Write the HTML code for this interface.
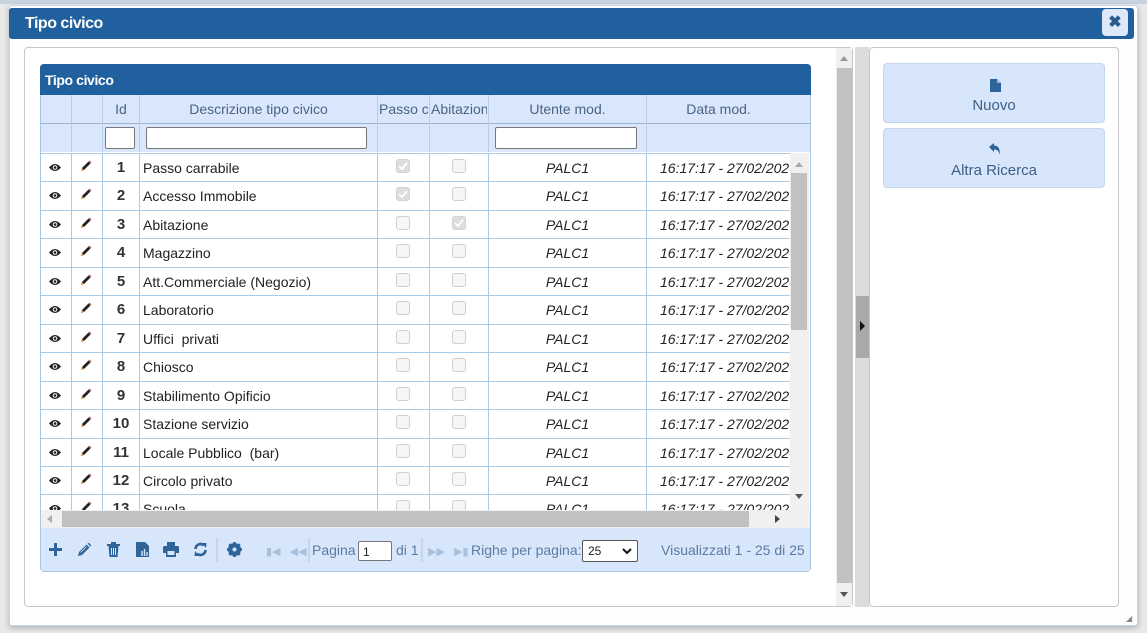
<!DOCTYPE html>
<html><head><meta charset="utf-8"><style>
*{box-sizing:border-box;margin:0;padding:0}
body{width:1147px;height:633px;background:#e9e9e9;font-family:"Liberation Sans",sans-serif;position:relative;overflow:hidden}
.a{position:absolute}
.dlg{left:9px;top:5px;width:1129px;height:621px;background:#fdfeff;border:1px solid #c8d6e6;border-radius:3px;box-shadow:0 2px 6px rgba(0,0,0,.25)}
.tb{left:9px;top:8px;width:1125px;height:31px;background:#20609e;border-radius:3px}
.tb span{position:absolute;left:16px;top:7px;color:#fff;font-weight:bold;font-size:16px;letter-spacing:-.5px}
.close{left:1102px;top:9px;width:26px;height:27px;background:#dde8f9;border-radius:4px;color:#2a5c8c;font-weight:bold;font-size:16px;text-align:center;line-height:27px}
.lp{left:24px;top:47px;width:829px;height:560px;border:1px solid #c6c6c6;border-radius:4px;background:#fff}
.vs{left:836px;top:48px;width:16px;height:558px;background:#f0f0f0}
.vthumb{left:837px;top:68px;width:15px;height:515px;background:#c1c1c1}
.split{left:855px;top:47px;width:14px;height:560px;background:#dcdcdc}
.rp{left:869px;top:47px;width:250px;height:560px;border:1px solid #c6c6c6;border-radius:4px;background:#fff}
.btn{left:883px;width:222px;height:60px;background:#d8e6fc;border:1px solid #c5d6ee;border-radius:4px;text-align:center;color:#3d5f85;font-size:15px}
.grid{left:40px;top:64px;width:771px;height:508px;border:1px solid #a8c6e6;border-radius:4px;background:#fff;overflow:hidden}
.cap{left:40px;top:64px;width:771px;height:31px;background:#20609e;border-radius:4px 4px 0 0}
.cap span{position:absolute;left:5px;top:8px;color:#fff;font-weight:bold;font-size:14px;letter-spacing:-.4px}
.hdr{left:41px;top:95px;width:769px;height:57px;background:#dae6fb}
.hl{position:absolute;top:95px;height:57px;width:1px;background:#b9cde6}
.ht{position:absolute;top:101px;color:#4a6584;font-size:14px;text-align:center;white-space:nowrap;overflow:hidden}
.fi{position:absolute;top:127px;height:22px;background:#fff;border:1px solid #777;border-radius:2px}
.body{left:41px;top:153px;width:750px;height:357px;overflow:hidden}
.row{position:absolute;left:0;width:750px;height:29px;border-top:1px solid #a8cbe8}
.c{position:absolute;top:0;height:29px;font-size:14px;line-height:28px;color:#222;white-space:nowrap;overflow:hidden}
.vl{position:absolute;top:153px;height:357px;width:1px;background:#a8cbe8}
.cb{position:absolute;top:5px;width:14px;height:14px;border:1px solid #cfcfcf;border-radius:3px;background:#f6f6f6}
.cb.k{background:#dedede;border-color:#d4d4d4}
.ivs{left:790px;top:153px;width:19px;height:357px;background:#f0f0f0}
.ith{left:791px;top:173px;width:16px;height:157px;background:#c1c1c1}
.hs{left:41px;top:510px;width:769px;height:18px;background:#f0f0f0}
.hth{left:62px;top:511px;width:687px;height:16px;background:#c1c1c1}
.ft{left:41px;top:528px;width:769px;height:43px;background:#d8e6fc}
.fic{position:absolute;top:541px;color:#2e6499;font-size:15px}
.ftt{position:absolute;top:542px;color:#5b7ba0;font-size:14px;white-space:nowrap}
.sep{position:absolute;top:538px;width:2px;height:24px;background:#c6d5ea}
</style></head><body>
<div class="a" style="left:0;top:0;width:1147px;height:4px;background:#c7d3df"></div>
<div class="a dlg"></div>
<div class="a tb"><span>Tipo civico</span></div>
<div class="a close">✖</div>
<div class="a lp"></div>
<div class="a vs"></div>
<div class="a vthumb"></div>
<div class="a" style="left:840px;top:56px;width:0;height:0;border-left:4px solid transparent;border-right:4px solid transparent;border-bottom:5px solid #999"></div>
<div class="a" style="left:840px;top:592px;width:0;height:0;border-left:4px solid transparent;border-right:4px solid transparent;border-top:5px solid #555"></div>
<div class="a split"></div>
<div class="a" style="left:856px;top:296px;width:13px;height:62px;background:#a9a9a9"></div>
<div class="a" style="left:860px;top:321px;width:0;height:0;border-top:5px solid transparent;border-bottom:5px solid transparent;border-left:5px solid #111"></div>
<div class="a rp"></div>
<div class="a btn" style="top:63px"><svg style="position:absolute;left:106px;top:15px" width="11" height="13" viewBox="0 0 11 13"><path d="M0 0H7L11 4V13H0Z" fill="#2e6499"/><path d="M7 0V4H11" fill="#9db8d8"/></svg><div style="position:absolute;left:0;right:0;top:33px">Nuovo</div></div>
<div class="a btn" style="top:128px"><svg style="position:absolute;left:105px;top:14px" width="12" height="12" viewBox="0 0 12 12"><path d="M0 4L5 0V2.5C9 2.5 11 5 11 12C10 8 8 6.5 5 6.5V9Z" fill="#2e6499"/></svg><div style="position:absolute;left:0;right:0;top:33px">Altra Ricerca</div></div>

<div class="a grid"></div>
<div class="a cap"><span>Tipo civico</span></div>
<div class="a hdr"></div>
<div class="a" style="left:41px;top:123px;width:769px;height:1px;background:#9fb4cc"></div>
<div class="hl" style="left:71px"></div><div class="hl" style="left:102px"></div><div class="hl" style="left:139px"></div><div class="hl" style="left:377px"></div><div class="hl" style="left:429px"></div><div class="hl" style="left:488px"></div><div class="hl" style="left:646px"></div>
<div class="ht" style="left:103px;width:36px">Id</div>
<div class="ht" style="left:140px;width:237px">Descrizione tipo civico</div>
<div class="ht" style="left:379px;width:49px;text-align:left">Passo carrabile</div>
<div class="ht" style="left:431px;width:56px;text-align:left">Abitazione</div>
<div class="ht" style="left:489px;width:157px">Utente mod.</div>
<div class="ht" style="left:647px;width:143px">Data mod.</div>
<div class="fi" style="left:105px;width:30px"></div>
<div class="fi" style="left:146px;width:221px"></div>
<div class="fi" style="left:495px;width:142px"></div>

<div class="a body" id="b"></div>
<div class="vl" style="left:71px"></div><div class="vl" style="left:102px"></div><div class="vl" style="left:139px"></div><div class="vl" style="left:377px"></div><div class="vl" style="left:429px"></div><div class="vl" style="left:488px"></div><div class="vl" style="left:646px"></div>
<div class="a ivs"></div>
<div class="a ith"></div>
<div class="a" style="left:795px;top:162px;width:0;height:0;border-left:4px solid transparent;border-right:4px solid transparent;border-bottom:5px solid #aaa"></div>
<div class="a" style="left:795px;top:494px;width:0;height:0;border-left:4px solid transparent;border-right:4px solid transparent;border-top:5px solid #555"></div>
<div class="a hs"></div>
<div class="a hth"></div>
<div class="a" style="left:47px;top:515px;width:0;height:0;border-top:4px solid transparent;border-bottom:4px solid transparent;border-right:5px solid #aaa"></div>
<div class="a" style="left:775px;top:515px;width:0;height:0;border-top:4px solid transparent;border-bottom:4px solid transparent;border-left:5px solid #444"></div>
<div class="a ft"></div>
<svg class="a" style="left:49px;top:543px" width="13" height="13" viewBox="0 0 13 13"><path d="M5 0H8V5H13V8H8V13H5V8H0V5H5Z" fill="#2e6499"/></svg>
<svg class="a" style="left:78px;top:543px" width="13" height="13" viewBox="0 0 13 13"><path d="M0 13L1 9L8.5 1.5L11.5 4.5L4 12Z M2 10L3 11" fill="#2e6499"/><path d="M9.5 0.5L10.5 -0.5L13.5 2.5L12.5 3.5Z" fill="#2e6499"/><path d="M2.5 9.5L8.5 3.5" stroke="#d8e6fc" stroke-width=".8"/></svg>
<svg class="a" style="left:107px;top:542px" width="13" height="15" viewBox="0 0 13 15"><path d="M0 2H13V4H0ZM4 0H9V2H4ZM1.5 4H11.5L10.5 15H2.5Z" fill="#2e6499"/><path d="M4.5 6V13M6.5 6V13M8.5 6V13" stroke="#d8e6fc" stroke-width="1"/></svg>
<svg class="a" style="left:136px;top:542px" width="13" height="15" viewBox="0 0 13 15"><path d="M0 0H9L13 4V15H0Z" fill="#2e6499"/><path d="M6 14V9M8.5 14V7M11 14V10" stroke="#d8e6fc" stroke-width="1.4"/></svg>
<svg class="a" style="left:163px;top:542px" width="16" height="15" viewBox="0 0 16 15"><path d="M4 0H12V4H4Z M0 5Q0 4 2 4H14Q16 4 16 5V11H13V15H3V11H0Z" fill="#2e6499"/><rect x="4.5" y="9" width="7" height="4" fill="#d8e6fc"/></svg>
<svg class="a" style="left:193px;top:542px" width="15" height="15" viewBox="0 0 15 15"><path d="M2.5 7A5 5 0 0 1 11 3.5" stroke="#2e6499" stroke-width="2.6" fill="none"/><path d="M9 1L13.5 1L13 6Z" fill="#2e6499"/><path d="M12.5 8A5 5 0 0 1 4 11.5" stroke="#2e6499" stroke-width="2.6" fill="none"/><path d="M6 14L1.5 14L2 9Z" fill="#2e6499"/></svg>
<div class="sep" style="left:216px"></div>
<svg class="a" style="left:227px;top:542px" width="15" height="15" viewBox="0 0 15 15"><circle cx="7.5" cy="7.5" r="5" fill="none" stroke="#2e6499" stroke-width="3"/><path d="M7.5 0V15M0 7.5H15M2.2 2.2L12.8 12.8M12.8 2.2L2.2 12.8" stroke="#2e6499" stroke-width="2.6"/><circle cx="7.5" cy="7.5" r="2" fill="#d8e6fc"/></svg>
<div class="ftt" style="left:266px;color:#a9c0dc;font-size:11px;top:545px">▮◀ &nbsp; ◀◀</div>
<div class="sep" style="left:308px"></div>
<div class="ftt" style="left:312px">Pagina</div>
<div class="a" style="left:358px;top:541px;width:34px;height:20px;background:#fff;border:1px solid #777;border-radius:2px;font-size:12px;padding:3px 4px;color:#222">1</div>
<div class="ftt" style="left:396px">di 1</div>
<div class="sep" style="left:421px"></div>
<div class="ftt" style="left:428px;color:#a9c0dc;font-size:11px;top:545px">▶▶ &nbsp; ▶▮</div>
<div class="ftt" style="left:471px">Righe per pagina:</div>
<div class="a" style="left:582px;top:540px;width:56px;height:22px;background:#fff;border:1px solid #555;border-radius:2px;font-size:12px;padding:3px 5px;color:#222">25<svg style="position:absolute;right:5px;top:7px" width="10" height="7" viewBox="0 0 10 7"><path d="M1 1L5 5L9 1" stroke="#111" stroke-width="2" fill="none"/></svg></div>
<div class="ftt" style="left:661px">Visualizzati 1 - 25 di 25</div>
<div class="a" style="left:1126px;top:614px;font-size:8px;color:#888">◢</div>

<script>
var d=["Passo carrabile","Accesso Immobile","Abitazione","Magazzino","Att.Commerciale (Negozio)","Laboratorio","Uffici&nbsp; privati","Chiosco","Stabilimento Opificio","Stazione servizio","Locale Pubblico&nbsp; (bar)","Circolo privato","Scuola"];
var h="";
var eye='<svg width="12" height="9" viewBox="0 0 12 9"><path d="M0 4.5Q6 -2.5 12 4.5Q6 11.5 0 4.5Z" fill="#222"/><circle cx="6" cy="4.5" r="2.3" fill="#fff"/><circle cx="6" cy="4.5" r="1.3" fill="#222"/></svg>';
var pen='<svg width="12" height="12" viewBox="0 0 12 12"><path d="M1 11L2 8L8.5 1.5L10.5 3.5L4 10Z" fill="#222"/><path d="M2 8L4 10L1 11Z" fill="#e0a050"/><path d="M8.5 1.5L9.5 0.5L11.5 2.5L10.5 3.5Z" fill="#c06040"/></svg>';
var chk='<svg style="position:absolute;left:1px;top:1px" width="10" height="10" viewBox="0 0 10 10"><path d="M1 5L4 8L9 2" stroke="#fff" stroke-width="1.8" fill="none"/></svg>';
for(var i=0;i<13;i++){
var t=(i*28.45).toFixed(2);
h+='<div class="row" style="top:'+t+'px">'+
'<div class="c" style="left:8px;top:-1px">'+eye+'</div>'+
'<div class="c" style="left:39px;top:-1px">'+pen+'</div>'+
'<div class="c" style="left:62px;width:36px;text-align:center;font-size:15px;font-weight:bold;color:#333">'+(i+1)+'</div>'+
'<div class="c" style="left:102px">'+d[i]+'</div>'+
'<div class="cb'+(i<2?' k':'')+'" style="left:355px">'+(i<2?chk:'')+'</div>'+
'<div class="cb'+(i==2?' k':'')+'" style="left:411px">'+(i==2?chk:'')+'</div>'+
'<div class="c" style="left:448px;width:157px;text-align:center;font-style:italic">PALC1</div>'+
'<div class="c" style="left:619px;font-style:italic">16:17:17 - 27/02/2020</div>'+
'</div>';}
document.getElementById("b").innerHTML=h;
</script>
</body></html>
